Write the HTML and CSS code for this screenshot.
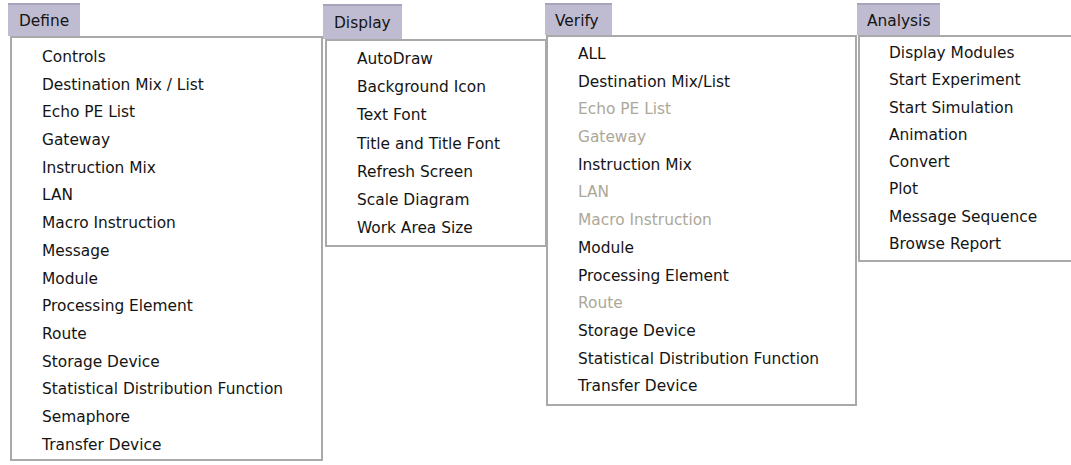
FILE: index.html
```html
<!DOCTYPE html>
<html lang="en">
<head>
<meta charset="utf-8">
<title>Menus</title>
<link rel="stylesheet" href="styles.css">
</head>
<body>
<main class="menus">
  <section class="menu menu-define">
    <div class="tab">Define</div>
    <ul class="list">
      <li>Controls</li>
      <li>Destination Mix / List</li>
      <li>Echo PE List</li>
      <li>Gateway</li>
      <li>Instruction Mix</li>
      <li>LAN</li>
      <li>Macro Instruction</li>
      <li>Message</li>
      <li>Module</li>
      <li>Processing Element</li>
      <li>Route</li>
      <li>Storage Device</li>
      <li>Statistical Distribution Function</li>
      <li>Semaphore</li>
      <li>Transfer Device</li>
    </ul>
  </section>

  <section class="menu menu-display">
    <div class="tab">Display</div>
    <ul class="list">
      <li>AutoDraw</li>
      <li>Background Icon</li>
      <li>Text Font</li>
      <li>Title and Title Font</li>
      <li>Refresh Screen</li>
      <li>Scale Diagram</li>
      <li>Work Area Size</li>
    </ul>
  </section>

  <section class="menu menu-verify">
    <div class="tab">Verify</div>
    <ul class="list">
      <li>ALL</li>
      <li>Destination Mix/List</li>
      <li class="disabled">Echo PE List</li>
      <li class="disabled">Gateway</li>
      <li>Instruction Mix</li>
      <li class="disabled">LAN</li>
      <li class="disabled">Macro Instruction</li>
      <li>Module</li>
      <li>Processing Element</li>
      <li class="disabled">Route</li>
      <li>Storage Device</li>
      <li>Statistical Distribution Function</li>
      <li>Transfer Device</li>
    </ul>
  </section>

  <section class="menu menu-analysis">
    <div class="tab">Analysis</div>
    <ul class="list">
      <li>Display Modules</li>
      <li>Start Experiment</li>
      <li>Start Simulation</li>
      <li>Animation</li>
      <li>Convert</li>
      <li>Plot</li>
      <li>Message Sequence</li>
      <li>Browse Report</li>
    </ul>
  </section>
</main>
</body>
</html>
```

FILE: styles.css
```css
* {
  box-sizing: border-box;
}

html, body {
  margin: 0;
  background: #ffffff;
  overflow: hidden;
}

body {
  width: 1071px;
  height: 465px;
  font-family: "DejaVu Sans", "Liberation Sans", sans-serif;
  font-size: 15.4px;
  color: #141414;
}

.menus {
  display: flex;
  align-items: flex-start;
}

.menu {
  flex: 0 0 auto;
  display: flex;
  flex-direction: column;
  align-items: flex-start;
}

/* menu bar title */
.tab {
  background: #bfbcd2;
  border-top: 2px solid #a6a3bb;
  padding-left: 11px;
  padding-top: 1px;
  white-space: nowrap;
}

/* drop-down panel */
.list {
  margin: 0;
  list-style: none;
  background: #ffffff;
  border: 2px solid #a9a9a9;
  padding-left: 30px;
}

.list li {
  white-space: nowrap;
  line-height: var(--row);
  height: var(--row);
}

.list li.disabled {
  color: #aca899;
}

/* Define */
.menu-define {
  margin-left: 8px;
  margin-top: 3px;
}
.menu-define .tab {
  width: 72px;
  height: 33px;
  line-height: 31px;
}
.menu-define .list {
  --row: 27.7px;
  margin-left: 2px;
  width: 313px;
  padding-top: 6px;
  padding-bottom: 0;
}

/* Display */
.menu-display {
  margin-top: 4px;
}
.menu-display .tab {
  width: 79px;
  height: 35px;
  line-height: 33px;
}
.menu-display .list {
  --row: 28.2px;
  margin-left: 2px;
  width: 222px;
  padding-top: 4px;
  padding-bottom: 3px;
}

/* Verify */
.menu-verify {
  margin-left: -2px;
  margin-top: 3px;
}
.menu-verify .tab {
  width: 67px;
  height: 32px;
  line-height: 30px;
  padding-left: 10px;
}
.menu-verify .list {
  --row: 27.7px;
  margin-left: 1px;
  width: 311px;
  padding-top: 4px;
  padding-bottom: 3px;
}

/* Analysis */
.menu-analysis {
  margin-top: 3px;
}
.menu-analysis .tab {
  width: 83px;
  height: 32px;
  line-height: 30px;
  padding-left: 10px;
}
.menu-analysis .list {
  --row: 27.3px;
  margin-left: 1px;
  width: 220px;
  padding-top: 3px;
  padding-bottom: 2px;
  padding-left: 29px;
}
```
